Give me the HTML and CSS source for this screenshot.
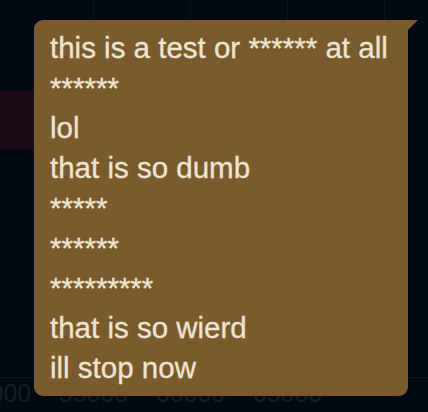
FILE: index.html
```html
<!DOCTYPE html>
<html>
<head>
    <title>Chat history</title>
    <link rel="stylesheet" href="styles.css">
</head>
<body>
    <div class="chart">
        <div class="plot">
            <div class="bar"></div>
        </div>
        <div class="labels">
            <span>50000</span>
            <span>55000</span>
            <span>60000</span>
            <span>65000</span>
        </div>

        <!-- message bubble hovering over the chart -->
        <div class="bubble">
            <div class="msg">this is a test or ****** at all</div>
            <div class="msg">******</div>
            <div class="msg">lol</div>
            <div class="msg">that is so dumb</div>
            <div class="msg">*****</div>
            <div class="msg">******</div>
            <div class="msg">*********</div>
            <div class="msg">that is so wierd</div>
            <div class="msg">ill stop now</div>
        </div>
    </div>
</body>
</html>
```

FILE: styles.css
```css
body { margin: 0; background: #030912; font-family: "Liberation Sans", Arial, sans-serif; }
.chart { position: relative; height: 412px; overflow: hidden; }
.plot { height: 378px; border-bottom: 1px solid #0d1720; padding-top: 90px; box-sizing: border-box;
        background: repeating-linear-gradient(to right, transparent 0 93px, #0a141e 93px 94px, transparent 94px 97px); }
.bar { width: 220px; height: 60px; background: #1c0b17; }
.labels { display: flex; margin-left: -52px; }
.labels span { flex: 0 0 97px; text-align: center; font-size: 25px; line-height: 30px; color: #161f29; }
.bubble { position: absolute; left: 34px; top: 20px; width: 374px; box-sizing: border-box; padding: 8px 16px;
          background: #7a5b2e; color: #efe4d0; border-radius: 9px 0 9px 9px; }
.bubble::after { content: ""; position: absolute; left: 100%; top: 0; border-top: 10px solid #7a5b2e; border-right: 10px solid transparent; }
.msg { font-size: 29.5px; line-height: 40px; white-space: nowrap; -webkit-text-stroke: 0.3px currentColor; }
```
